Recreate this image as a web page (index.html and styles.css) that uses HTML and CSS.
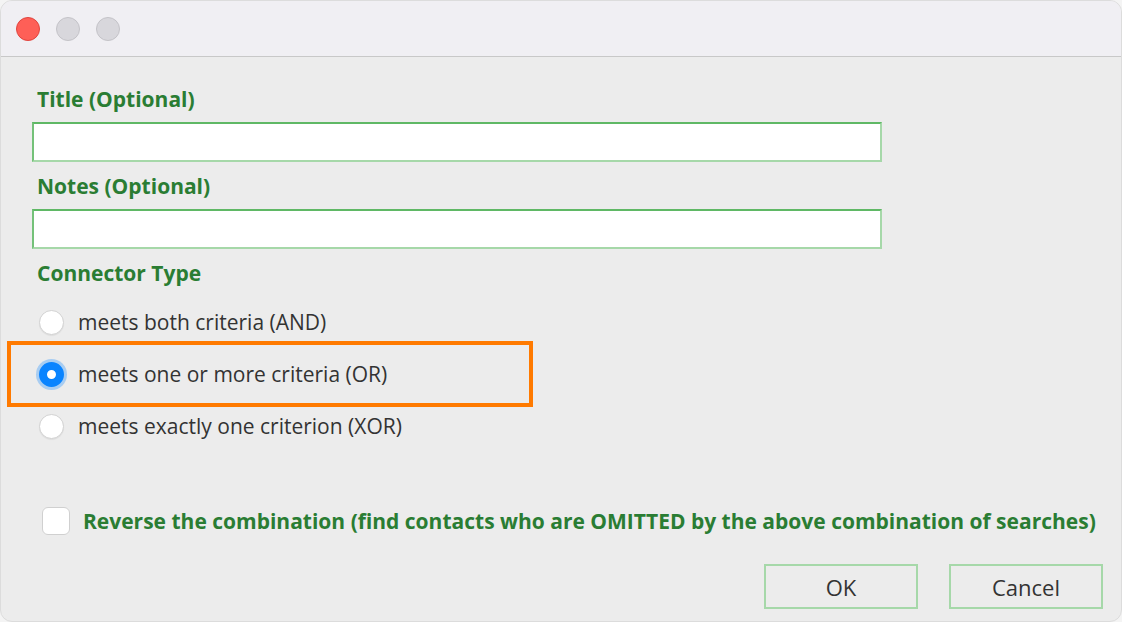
FILE: index.html
```html
<!DOCTYPE html>
<html lang="en">
<head>
  <meta charset="UTF-8" />
  <title>Combine Searches</title>
  <link rel="stylesheet" href="styles.css">
</head>
<body>
  <div class="window">
    <div class="titlebar">
      <span class="light close"></span>
      <span class="light"></span>
      <span class="light"></span>
    </div>

    <div class="content">
      <label class="field-label" for="title">Title (Optional)</label>
      <input type="text" id="title" class="field" />

      <label class="field-label" for="notes">Notes (Optional)</label>
      <input type="text" id="notes" class="field" />

      <div class="field-label">Connector Type</div>
      <div class="options">
        <label class="option"><span class="radio"></span>meets both criteria (AND)</label>
        <label class="option selected"><span class="radio checked"></span>meets one or more criteria (OR)</label>
        <label class="option"><span class="radio"></span>meets exactly one criterion (XOR)</label>
      </div>

      <label class="reverse"><span class="checkbox"></span>Reverse the combination (find contacts who are OMITTED by the above combination of searches)</label>

      <div class="actions">
        <button>OK</button>
        <button>Cancel</button>
      </div>
    </div>
  </div>
</body>
</html>
```

FILE: styles.css
```css
html, body { margin: 0; height: 100%; background: #f4f4f4; }
body { font-family: "Open Sans", "Noto Sans", sans-serif; color: #333; }

.window {
  height: 622px; background: #ececec; border-radius: 12px; overflow: hidden;
  box-sizing: border-box; border: 1px solid #dcdcdc;
}
.titlebar {
  height: 55px; background: #f0eff3; border-bottom: 1px solid #c8c8c8;
  display: flex; align-items: center; gap: 16px; padding-left: 15px;
}
.light {
  width: 24px; height: 24px; border-radius: 50%; box-sizing: border-box;
  background: #d8d7dc; border: 1px solid #c4c3c8;
}
.light.close { background: #fe5f57; border-color: #e0443e; }

.content { padding: 26px 0 0 31px; display: flex; flex-direction: column; }

.field-label {
  display: block; color: #2a7d33; font-weight: bold; font-size: 21px;
  padding-left: 5px; height: 32px; line-height: 32px; margin-bottom: 7px;
}
.field {
  width: 850px; height: 40px; box-sizing: border-box; margin: 0 0 8px 0;
  background: #fff; border: 2px solid #a6d8a9; border-top-color: #5fb865; border-left-color: #74c179;
  outline: none;
}

.options { display: flex; flex-direction: column; width: 526px; margin-left: -25px; }
.option {
  display: flex; align-items: center; height: 52px; font-size: 21px; color: #333;
  padding-left: 28px; box-sizing: border-box; border: 4px solid transparent;
}
.option.selected { border-color: #ff7a00; height: 66px; margin: -7px 0; }
.radio {
  width: 25px; height: 25px; border-radius: 50%; box-sizing: border-box; background: #fff;
  border: 1px solid #d2d2d2; margin-right: 14px; flex: none;
  box-shadow: 0 1px 1px rgba(0,0,0,0.06);
}
.radio.checked {
  background: #fff; border: 8px solid #0a84ff;
  box-shadow: 0 0 0 3px rgba(10,132,255,0.3);
}

.reverse {
  display: flex; align-items: center; height: 32px; margin-top: 53px; padding-left: 10px;
  color: #2a7d33; font-weight: bold; font-size: 21px;
}
.checkbox {
  width: 28px; height: 28px; border-radius: 6px; box-sizing: border-box;
  background: #fff; border: 1px solid #d0d0d0; margin-right: 13px; flex: none;
}

.actions { display: flex; justify-content: flex-end; gap: 31px; margin: 27px 18px 0 0; }
.actions button {
  width: 154px; height: 45px; background: transparent; color: #333;
  font-family: inherit; font-size: 22px; border: 2px solid #a6d8a9; cursor: pointer;
}
```
